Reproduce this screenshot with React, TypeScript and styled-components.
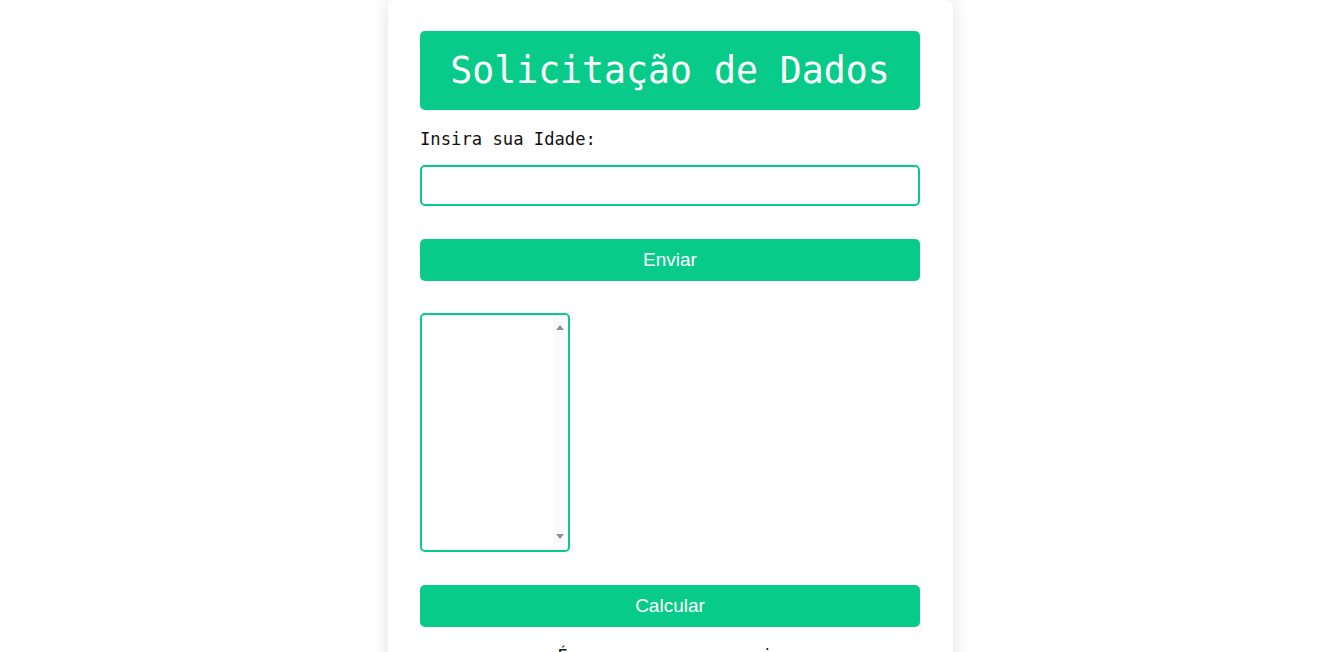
import React from 'react';
import styled, { createGlobalStyle } from 'styled-components';

const GREEN = '#08cb8a';
const ARROW = '#8f8f8f';

const GlobalStyle = createGlobalStyle`
  html, body {
    margin: 0;
    padding: 0;
    background: #ffffff;
    overflow: hidden;
  }
  * {
    box-sizing: border-box;
  }
`;

const CardStyled = styled.div`
  width: 565px;
  margin: 0 auto;
  padding: 31px 33px 40px 32px;
  background: #ffffff;
  border-radius: 8px;
  box-shadow: 0 0 18px rgba(0, 0, 0, 0.12);
`;

const TitleStyled = styled.h1`
  margin: 0;
  height: 79px;
  background: ${GREEN};
  color: #ffffff;
  border-radius: 5px;
  font-family: 'DejaVu Sans Mono', 'Liberation Mono', monospace;
  font-weight: normal;
  font-size: 36.5px;
  line-height: 79px;
  text-align: center;
`;

const LabelStyled = styled.label`
  display: block;
  margin-top: 19px;
  font-family: 'DejaVu Sans Mono', 'Liberation Mono', monospace;
  font-size: 17.2px;
  line-height: 20px;
  color: #111111;
`;

const InputStyled = styled.input`
  display: block;
  width: 100%;
  height: 41px;
  margin-top: 16px;
  padding: 0 10px;
  border: 2px solid ${GREEN};
  border-radius: 5px;
  outline: none;
  font-size: 16px;
`;

const ButtonStyled = styled.button<{ $top: number }>`
  display: block;
  width: 100%;
  height: 42px;
  margin-top: ${(p) => p.$top}px;
  border: none;
  border-radius: 5px;
  background: ${GREEN};
  color: #ffffff;
  font-family: 'Liberation Sans', Arial, sans-serif;
  font-size: 19px;
  cursor: pointer;
`;

const TextAreaWrapStyled = styled.div`
  position: relative;
  width: 150px;
  height: 239px;
  margin-top: 32px;
`;

const TextAreaStyled = styled.textarea`
  display: block;
  width: 100%;
  height: 100%;
  padding: 4px 18px 4px 4px;
  border: 2px solid ${GREEN};
  border-radius: 5px;
  outline: none;
  resize: none;
  overflow: hidden;
  font-family: 'DejaVu Sans Mono', monospace;
  font-size: 14px;
`;

// classic scrollbar look drawn over the textarea's right side
const ScrollTrackStyled = styled.div`
  position: absolute;
  top: 2px;
  right: 3px;
  bottom: 2px;
  width: 14px;
  padding: 10px 0 11px;
  background: #fafafa;
  display: flex;
  flex-direction: column;
  justify-content: space-between;
  align-items: center;
  pointer-events: none;
`;

const ArrowStyled = styled.span<{ $down?: boolean }>`
  width: 0;
  height: 0;
  border-left: 4.5px solid transparent;
  border-right: 4.5px solid transparent;
  ${(p) =>
    p.$down
      ? `border-top: 5px solid ${ARROW};`
      : `border-bottom: 5px solid ${ARROW};`}
`;

const ResultStyled = styled.p`
  margin: 18px 0 0;
  font-family: 'DejaVu Sans Mono', 'Liberation Mono', monospace;
  font-size: 17px;
  line-height: 22px;
  text-align: center;
  color: #111133;
`;

export default function App() {
  return (
    <>
      <GlobalStyle />
      <CardStyled>
        <TitleStyled>Solicitação de Dados</TitleStyled>
        <LabelStyled htmlFor="idade">Insira sua Idade:</LabelStyled>
        <InputStyled id="idade" type="text" />
        <ButtonStyled $top={33}>Enviar</ButtonStyled>
        <TextAreaWrapStyled>
          <TextAreaStyled readOnly />
          <ScrollTrackStyled>
            <ArrowStyled />
            <ArrowStyled $down />
          </ScrollTrackStyled>
        </TextAreaWrapStyled>
        <ButtonStyled $top={33}>Calcular</ButtonStyled>
        <ResultStyled>É uma soma com uma via</ResultStyled>
      </CardStyled>
    </>
  );
}
